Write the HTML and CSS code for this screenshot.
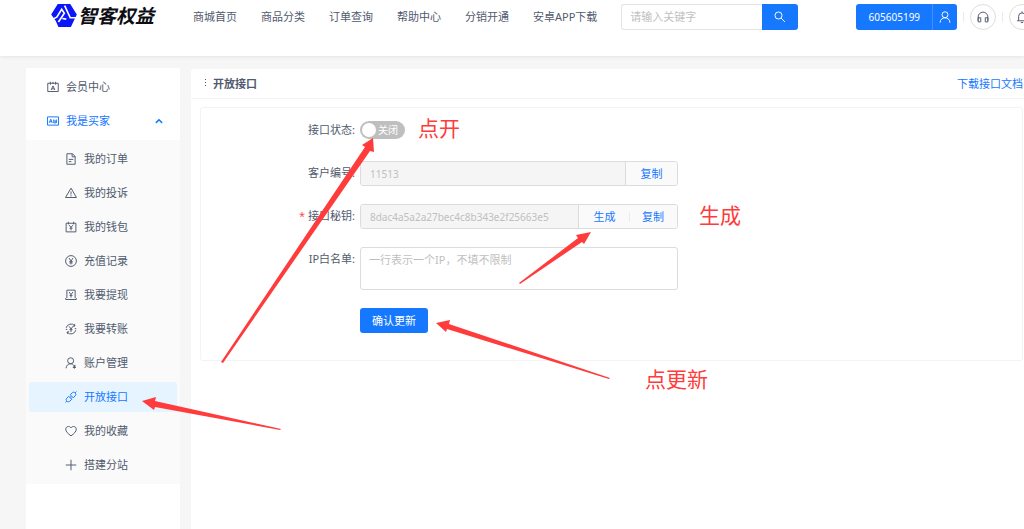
FILE: index.html
```html
<!DOCTYPE html>
<html lang="zh-CN">
<head>
<meta charset="utf-8">
<meta name="viewport" content="width=device-width, initial-scale=1">
<title>开放接口 - 智客权益</title>
<link rel="stylesheet" href="styles.css">
</head>
<body>
<header class="topbar">
  <a class="logo" href="#">
    <svg class="logo-mark" viewBox="0 0 78 70" aria-hidden="true">
      <path fill="#0b16fb" d="M20 0H58L78 32L60 70H22L14 52L0 32Z"/>
      <path fill="none" stroke="#fff" stroke-width="5" d="M5 46L17 40L32 16L40 28L22 55M41 5L58 42H78M34 44L46 46"/>
    </svg>
    <span class="logo-text">智客权益</span>
  </a>
  <nav class="nav">
    <a href="#">商城首页</a>
    <a href="#">商品分类</a>
    <a href="#">订单查询</a>
    <a href="#">帮助中心</a>
    <a href="#">分销开通</a>
    <a href="#">安卓APP下载</a>
  </nav>
  <form class="search">
    <input type="text" placeholder="请输入关键字" aria-label="请输入关键字">
    <button type="button" aria-label="搜索">
      <svg class="icon" viewBox="0 0 16 16"><circle cx="6" cy="6" r="4.700"/><path d="M9.500 9.500l5 5"/></svg>
    </button>
  </form>
  <div class="account">
    <div class="user">
      <button type="button" class="user-id">605605199</button>
      <button type="button" class="user-icon" aria-label="个人中心">
        <svg class="icon" viewBox="0 0 16 16"><circle cx="8" cy="5" r="4"/><path d="M1.500 15.500c0-4 3-6.500 6.500-6.500s6.500 2.500 6.500 6.500"/></svg>
      </button>
    </div>
    <span class="divider"></span>
    <button type="button" class="round" aria-label="客服">
      <svg class="icon" viewBox="0 0 16 16"><path d="M1.500 13V8a6.500 6.500 0 0 1 13 0v5M1.500 9h3.500v5.500H1.500zM11 9h3.500v5.500H11z"/></svg>
    </button>
    <span class="divider"></span>
    <button type="button" class="round" aria-label="通知">
      <svg class="icon" viewBox="0 0 16 16"><path d="M1.500 13h13M3.500 13V7a4.500 4.500 0 0 1 9 0v6M8 2.500V.5M6.500 15.300h3"/></svg>
    </button>
  </div>
</header>

<div class="page">
  <aside class="sidebar">
    <a class="menu-item" href="#">
      <svg class="icon" viewBox="0 0 16 16"><path d="M1 3h14v11H1zM4.500 1v4M8 1v3M11.500 1v4M5.500 12L8 6.500l2.500 5.500M6.500 10.500h3"/></svg>
      会员中心
    </a>
    <a class="menu-item open" href="#">
      <svg class="icon" viewBox="0 0 16 16"><path d="M.7 2.500h14.600v11H.7zM3 10.500l2-5 2 5M4 9h2.500M9 6v4.500h3V8H9M12.500 6v4.500"/></svg>
      我是买家
      <svg class="icon chevron" viewBox="0 0 16 16"><path d="M3 11l5-5 5 5"/></svg>
    </a>
    <nav class="submenu">
      <a class="sub-item" href="#">
        <svg class="icon" viewBox="0 0 16 16"><path d="M2.500 1h7.500l3.500 3.500V15h-11zM9.500 1v4h4M5 8.500h6M5 11.500h3.500"/></svg>
        我的订单
      </a>
      <a class="sub-item" href="#">
        <svg class="icon" viewBox="0 0 16 16"><path d="M8 1.500L15.300 14H.7zM8 6v4M8 11v1.500"/></svg>
        我的投诉
      </a>
      <a class="sub-item" href="#">
        <svg class="icon" viewBox="0 0 16 16"><path d="M1.500 3h13v11.500h-13zM4.500 1v3.500M11.500 1v3.500M5.500 5.500L8 8.500l2.500-3M8 8.500v4M6 9.500h4"/></svg>
        我的钱包
      </a>
      <a class="sub-item" href="#">
        <svg class="icon" viewBox="0 0 16 16"><circle cx="8" cy="8" r="7.200"/><path d="M5.300 4L8 8l2.700-4M8 8v4.500M5.800 8.500h4.400M5.800 10.500h4.400"/></svg>
        充值记录
      </a>
      <a class="sub-item" href="#">
        <svg class="icon" viewBox="0 0 16 16"><path d="M2.500 12V1.500h11V12M1 12v2h14v-2M5.500 4L8 7.500 10.500 4M8 7.500v4M6 8.500h4"/></svg>
        我要提现
      </a>
      <a class="sub-item" href="#">
        <svg class="icon" viewBox="0 0 16 16"><path d="M1.500 6.500A6.800 6.800 0 0 1 13 3.500M14.500 9.500A6.800 6.800 0 0 1 3 12.500M12.500 1.500L13.300 4l-2.800.5M3.500 14.500L2.700 12l2.800-.5M1 8.500h2M13 7.500h2M5.500 4.500L8 8l2.500-3.500M8 8v4M6 8.800h4"/></svg>
        我要转账
      </a>
      <a class="sub-item" href="#">
        <svg class="icon" viewBox="0 0 16 16"><circle cx="7.500" cy="5" r="4"/><path d="M1.500 15c0-3.500 2.500-6 6-6 1.500 0 2.500.3 3.500 1M12.500 10.500v5M10.500 12h4M10.500 14h4"/></svg>
        账户管理
      </a>
      <a class="sub-item active" href="#">
        <svg class="icon" viewBox="0 0 16 16"><path d="M7 5l2.500-2.500c1.200-1.200 2.800-1.200 4 0s1.200 2.800 0 4L11 9zM13.500 2.500L15.300.7M5 7l4 4-2.500 2.500c-1.200 1.200-2.800 1.200-4 0s-1.200-2.800 0-4zM2.500 13.500L.7 15.300M6.500 8.500L8 7M8 10l1.500-1.500"/></svg>
        开放接口
      </a>
      <a class="sub-item" href="#">
        <svg class="icon" viewBox="0 0 16 16"><path d="M8 14.500C4 11.500 1 9 1 5.500 1 3.500 2.500 2 4.500 2 6 2 7.300 2.800 8 4c.7-1.200 2-2 3.500-2C13.500 2 15 3.500 15 5.500c0 3.500-3 6-7 9z"/></svg>
        我的收藏
      </a>
      <a class="sub-item" href="#">
        <svg class="icon" viewBox="0 0 16 16"><path d="M8 1v14M1 8h14"/></svg>
        搭建分站
      </a>
    </nav>
  </aside>

  <main class="panel">
    <div class="panel-head">
      <svg class="dots" viewBox="0 0 4 12" aria-hidden="true"><path d="M2 1h1v1H2zM2 4h1v1H2zM2 7h1v1H2z"/></svg>
      <h1>开放接口</h1>
      <a class="doc-link" href="#">下载接口文档</a>
    </div>
    <form class="form">
      <div class="row">
        <label for="status">接口状态:</label>
        <div class="switch">
          <input type="checkbox" role="switch" id="status">
          <span class="switch-text">关闭</span>
        </div>
      </div>
      <div class="row">
        <label for="client">客户编号:</label>
        <div class="group">
          <input type="text" id="client" value="11513" disabled>
          <div class="addon"><button type="button">复制</button></div>
        </div>
      </div>
      <div class="row">
        <label for="secret" class="required">接口秘钥:</label>
        <div class="group">
          <input type="text" id="secret" value="8dac4a5a2a27bec4c8b343e2f25663e5" disabled>
          <div class="addon">
            <button type="button">生成</button>
            <span class="divider"></span>
            <button type="button">复制</button>
          </div>
        </div>
      </div>
      <div class="row">
        <label for="ips">IP白名单:</label>
        <textarea id="ips" placeholder="一行表示一个IP，不填不限制"></textarea>
      </div>
      <div class="row actions">
        <button type="submit" class="primary">确认更新</button>
      </div>
    </form>
  </main>
</div>

<svg class="notes">
  <path d="M373 138L374 152L370 151L223 363L221 362L365 147L362 145Z"/>
  <path d="M591 232L584 244L582 242L520 284L519 283L578 238L576 235Z"/>
  <path d="M436 323L450 320L449 324L610 378L609 379L447 329L446 332Z"/>
  <path d="M142 401L156 397L155 401L281 429L280 430L155 407L154 410Z"/>
  <text x="418" y="136">点开</text>
  <text x="699" y="223">生成</text>
  <text x="645" y="387">点更新</text>
</svg>
</body>
</html>
```
FILE: styles.css
```css
* {
  box-sizing: border-box;
}

body {
  position: relative;
  display: flex;
  flex-direction: column;
  min-height: 100vh;
  margin: 0;
  overflow-x: hidden;
  background: #f6f6f6;
  color: #515a6e;
  font: 11px/16px "Noto Sans", "Noto Sans CJK SC", sans-serif;
}

a {
  color: inherit;
  text-decoration: none;
}

button,
input,
textarea {
  margin: 0;
  border: 0;
  background: none;
  color: inherit;
  font: inherit;
}

button {
  display: flex;
  align-items: center;
  justify-content: center;
  padding: 0;
  cursor: pointer;
}

::placeholder {
  color: #bfbfbf;
  opacity: 1;
}

.icon {
  flex: none;
  width: 12px;
  height: 12px;
  fill: none;
  stroke: currentColor;
  stroke-width: 1.3;
}

.divider {
  flex: none;
  width: 1px;
  height: 10px;
  background: #ebebeb;
}

/* Top bar */

.topbar {
  display: flex;
  align-items: flex-start;
  height: 56px;
  padding: 4px 0 0 51px;
  background: #fff;
  box-shadow: 0 1px 3px rgba(0, 0, 0, 0.08);
}

.logo {
  display: flex;
  flex: none;
  gap: 1px;
  width: 142px;
}

.logo-mark {
  width: 26px;
  height: 23px;
}

.logo-text {
  color: #0d0d14;
  font-size: 19px;
  font-style: italic;
  font-weight: 700;
  line-height: 24px;
}

.nav {
  display: flex;
  flex: none;
  gap: 24px;
  line-height: 26px;
}

.search {
  display: flex;
  flex: none;
  width: 177px;
  height: 26px;
  margin-left: 24px;
}

.search input {
  flex: 1;
  min-width: 0;
  padding: 0 8px;
  border: 1px solid #e4e4e4;
  border-right: 0;
  border-radius: 3px 0 0 3px;
}

.search button {
  width: 36px;
  border-radius: 0 3px 3px 0;
  background: #1677ff;
  color: #fff;
}

.account {
  display: flex;
  flex: none;
  align-items: center;
  gap: 6px;
  margin-left: 58px;
}

.user {
  display: flex;
  height: 26px;
  overflow: hidden;
  border-radius: 3px;
  background: #1677ff;
  color: #fff;
}

.user-id {
  width: 77px;
  border-right: 1px solid #4090ff;
  font-size: 10px;
}

.user-icon {
  width: 24px;
}

.round {
  width: 26px;
  height: 26px;
  border: 1px solid #dedede;
  border-radius: 50%;
}

/* Page body */

.page {
  display: flex;
  flex: 1;
  gap: 11px;
  padding: 12px 0 0 26px;
}

.sidebar {
  flex: none;
  width: 154px;
  padding-top: 2px;
  background: #fff;
}

.menu-item {
  display: flex;
  align-items: center;
  gap: 7px;
  height: 34px;
  padding: 0 16px 0 21px;
}

.menu-item.open {
  color: #1677ff;
}

.chevron {
  width: 10px;
  height: 10px;
  margin-left: auto;
  stroke-width: 2.5;
}

.submenu {
  display: flex;
  flex-direction: column;
  gap: 4px;
  margin-top: 2px;
  padding: 4px 3px;
  background: #fafafa;
}

.sub-item {
  display: flex;
  align-items: center;
  gap: 7px;
  height: 30px;
  padding-left: 36px;
  border-radius: 3px;
}

.sub-item.active {
  background: #e6f4ff;
  color: #1677ff;
}

.panel {
  flex: 1;
  min-width: 0;
  margin-top: 1px;
  border-radius: 3px 0 0 0;
  background: #fff;
}

.panel-head {
  display: flex;
  align-items: center;
  height: 30px;
  padding: 0 1px 0 12px;
  border-bottom: 1px solid #f3f3f3;
}

.dots {
  width: 4px;
  height: 12px;
  margin-right: 6px;
  fill: #515a6e;
}

h1 {
  margin: 0;
  font-size: 11px;
  font-weight: 700;
}

.doc-link {
  margin-left: auto;
  color: #1677ff;
}

/* Form */

.form {
  display: flex;
  flex-direction: column;
  gap: 18px;
  margin: 8px 1px 0 9px;
  padding: 10px 0 27px;
  border: 1px solid #f3f3f3;
  border-radius: 3px;
}

.row {
  display: flex;
  gap: 5px;
  min-height: 25px;
}

.row label {
  flex: none;
  width: 154px;
  line-height: 24px;
  text-align: right;
}

.required::before {
  content: "*";
  margin-right: 3px;
  color: #ff4d4f;
}

.switch {
  position: relative;
  width: 45px;
  height: 18px;
  margin-top: 3px;
}

.switch input {
  display: block;
  width: 100%;
  height: 100%;
  padding: 2px;
  border-radius: 9px;
  background: #bfbfbf;
  appearance: none;
}

.switch input::before {
  content: "";
  display: block;
  width: 14px;
  height: 14px;
  border-radius: 50%;
  background: #fff;
}

.switch-text {
  position: absolute;
  top: 1px;
  right: 7px;
  color: #fff;
  font-size: 10px;
  pointer-events: none;
}

.group,
.row textarea {
  width: 318px;
  border: 1px solid #dcdcdc;
  border-radius: 3px;
}

.group {
  display: flex;
  overflow: hidden;
}

.group input {
  flex: 1;
  min-width: 0;
  padding: 0 9px;
  background: #f5f5f5;
  color: #bfbfbf;
  font-size: 10px;
}

.addon {
  display: flex;
  align-items: center;
  border-left: 1px solid #dcdcdc;
  background: #fafafa;
}

.addon button {
  width: 51px;
  color: #1677ff;
}

.addon .divider {
  margin: 0 -1px;
}

.addon .divider + button {
  width: 48px;
}

.row textarea {
  height: 43px;
  padding: 4px 8px;
  resize: none;
}

.actions {
  padding-left: 159px;
}

.primary {
  padding: 0 12px;
  border-radius: 3px;
  background: #1677ff;
  color: #fff;
}

/* Hand-drawn callouts over the page */

.notes {
  position: absolute;
  inset: 0;
  width: 100%;
  height: 100%;
  fill: #ff3b3b;
  font-size: 21px;
  pointer-events: none;
}
```
